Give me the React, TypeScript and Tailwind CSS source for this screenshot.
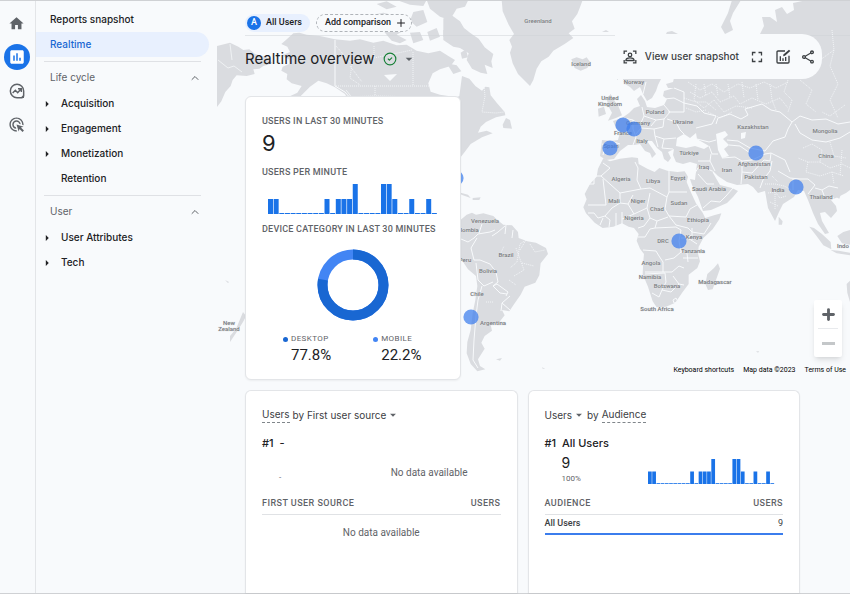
import React from "react";
import { MdAdsClick, MdArrowDropDown, MdArrowRight, MdHome, MdInsertChart, MdOutlineShare } from "react-icons/md";
import { ChevronUp, CircleCheck, Plus } from "lucide-react";

const perMinute = [1, 1, 0, 0, 0, 0, 0, 0, 0, 0, 1, 0, 1, 1, 1, 2, 0, 0, 0, 0, 2, 2, 1, 0, 0, 1, 0, 0, 1, 0];

const sections = [
  { title: "Life cycle", items: ["Acquisition", "Engagement", "Monetization", "Retention"] },
  { title: "User", items: ["User Attributes", "Tech"] },
];

const labels: [string, number, number][] = [
  ["Greenland", 538, 23], ["Iceland", 581, 66], ["Norway", 634, 84], ["United", 610, 100], ["Kingdom", 610, 106],
  ["Poland", 655, 114], ["Germany", 638, 125], ["France", 623, 135], ["Ukraine", 683, 124], ["Kazakhstan", 753, 129],
  ["Mongolia", 825, 133], ["China", 826, 158], ["Italy", 642, 143], ["Spain", 611, 148], ["Türkiye", 689, 155],
  ["Afghanistan", 754, 166], ["Pakistan", 756, 179], ["Iran", 727, 172], ["Iraq", 704, 169], ["Algeria", 621, 181],
  ["Libya", 653, 183], ["Egypt", 678, 180], ["Saudi Arabia", 709, 191], ["India", 778, 192], ["Thailand", 821, 199],
  ["Mali", 614, 203], ["Niger", 638, 203], ["Sudan", 679, 205], ["Chad", 657, 211], ["Nigeria", 634, 220],
  ["Ethiopia", 698, 222], ["DRC", 663, 243], ["Kenya", 694, 239], ["Tanzania", 693, 253], ["Angola", 651, 265],
  ["Namibia", 650, 279], ["Botswana", 667, 288], ["South Africa", 657, 311], ["Madagascar", 715, 284],
  ["Indo", 843, 248], ["Venezuela", 485, 223], ["Colombia", 466, 232], ["Brazil", 506, 257], ["Peru", 465, 262],
  ["Bolivia", 488, 273], ["Chile", 477, 296], ["Argentina", 493, 325], ["New", 229, 325], ["Zealand", 229, 331],
];

const activeUsers = [
  [623, 125], [634, 129], [610, 148], [756, 153], [796, 187], [679, 241], [471, 317], [456, 178],
];

const WorldMap = () => (
  <svg viewBox="217 1 633 376" preserveAspectRatio="xMinYMin slice" className="absolute inset-0 w-full h-full" aria-label="Active users by country">
    <g fill="#dadce0">
      {/* North America */}
      <g transform="translate(210 0) scale(.3333)">
        <path d="M20 138 45 132 60 128 85 140 100 150 118 148 135 162 170 172 188 190 160 198 148 206 130 208 134 222 110 228 80 226 68 240 62 258 46 276 34 304 20 322Z" />
        <path d="M232 116 250 100 268 98 290 104 330 108 375 118 420 122 450 118 490 128 520 122 560 136 590 134 620 152 655 160 690 152 715 168 735 180 722 198 690 208 668 220 655 250 662 275 690 284 730 290 750 320 750 560 560 560 430 330 405 282 375 262 350 250 325 242 300 260 270 290 235 302 215 300 262 278 275 258 245 250 230 238 232 222 214 212 218 200 238 192 236 178 216 166 240 156 232 140 214 132Z" />
        <path d="M480 46 520 38 560 48 585 66 580 92 560 104 590 120 570 130 545 122 520 92 490 74ZM500 12 530 4 560 20 530 28ZM610 36 640 30 652 66 620 80 600 62ZM652 96 680 84 690 110 660 122ZM600 98 630 96 640 120 610 130ZM560 0H650L640 18 600 14ZM700 90 740 96 764 120V146L730 140 700 120Z" />
      </g>
      <g transform="translate(450 0) scale(.3333)">
        <path d="M-70 0H55L45 20 20 26 0 60-30 50-60 26ZM-20 55 5 46 30 64 42 84 60 98 86 116 104 142 130 162 124 184 128 204 104 194 112 222 92 218 66 206 50 180 56 160 30 144 10 128-20 110ZM-10 190 20 196 34 214 10 222Z" />
        <path d="M0 300 28 288 36 228 58 236 76 258 96 272 106 260 118 262 122 286 140 308 164 336 166 346 138 352 108 366 92 380 84 398 110 392 128 400 96 412 62 432 44 456 30 474 0 490Z" />
        <path d="M158 374 168 354 180 360 186 386 160 384ZM48 148 32 158 36 176 54 172Z" />
        <path d="M155 0 158 34 176 74 192 102 178 120 186 140 180 158 188 190 204 222 240 258 250 240 260 206 274 184 296 170 310 152 344 132 370 114 356 100 374 86 366 64 382 42 390 22 398 0Z" />
        <path d="M364 178 380 172 398 178 410 172 422 188 412 204 392 212 374 204Z" />
        <path d="M482 282 492 300 506 320 516 346 498 354 474 362 486 338 476 320 470 296ZM444 326 462 320 468 342 446 350Z" />
      </g>
      {/* South America */}
      <g transform="translate(440 180) scale(.3333)">
        <path d="M50 130 80 104 96 98 108 104 130 100 160 108 170 118 190 134 216 136 234 156 236 174 262 184 288 188 318 204 324 222 302 250 298 286 286 308 254 320 242 344 220 376 208 394 186 390 194 406 180 424 152 434 156 452 134 468 124 488 134 506 114 538 120 558 136 568 112 574 92 552 80 520 82 486 92 450 98 400 106 360 112 318 108 288 84 268 64 238 40 220Z" />
        <path d="M62 38 84 44 92 54 64 44ZM98 54 122 52 118 60 98 60ZM168 538 186 534 180 542ZM306 562 316 566 308 566Z" />
      </g>
      {/* Europe and Asia */}
      <path d="M622 79 625 84 630 87 634 91 640 87 643 94 647 101 652 98 656 91 658 85 661 79 666 76 674 78 673 82 666 84 668 88 674 88 664 91 663 96 667 99 664 105 655 108 647 107 645 101 641 95 637 99 640 106 634 108 629 113 622 118 613 121 616 128 620 132 618 140 611 141 602 140 601 148 600 156 606 160 614 159 620 151 628 145 634 145 640 144 645 151 650 153 652 158 656 154 652 148 647 141 652 141 657 148 662 152 664 159 668 162 671 158 668 152 674 149 673 155 676 162 683 164 690 162 697 164 696 171 695 180 690 179 692 185 698 197 703 211 711 210 727 203 733 197 738 191 732 188 720 185 713 173 712 170 718 176 727 182 737 185 748 184 753 187 758 193 765 191 768 208 775 221 779 212 783 204 794 197 798 190 804 191 808 200 813 213 818 224 825 234 829 233 822 221 820 213 825 212 831 218 837 211 836 206 831 200 838 197 846 193 850 190V0H807L793 3 794 10 787 14 782 7 775 10 777 22 770 17 762 17 764 26 760 34V79H700L660 79Z" />
      <path d="M732 0H741L733 13 730 21 733 30 725 34 721 27 728 13ZM602 32 606 30 609 32ZM667 32 672 31 678 34H666Z" />
      <g transform="translate(560 130) scale(.3333)">
        <path d="M656 260 668 274 666 284 656 284ZM748 290 762 294 786 312 812 336 814 358 790 346 768 316ZM812 360 836 362 870 368V376L830 370ZM832 318 850 306 870 300V344L846 340ZM860 462 870 452V516L862 488ZM588 664H598L594 668ZM826 200 842 196 838 206Z" />
        <path d="M474 400 480 416 468 450 458 478 444 480 436 462 442 432 462 414Z" />
      </g>
      {/* Africa */}
      <path transform="translate(560 130) scale(.3333)" d="M130 85 150 94 180 86 216 82 234 84 236 102 262 116 284 126 298 114 322 122 352 126 374 124 384 140 380 156 394 190 408 220 428 248 436 264 462 256 484 250 478 268 458 298 430 324 416 350 414 370 420 394 412 414 386 434 386 462 368 486 346 518 318 530 290 532 278 514 264 470 248 432 250 392 252 372 240 356 230 332 236 312 222 294 206 290 186 280 160 290 128 294 104 278 78 250 70 232 80 208 74 192 90 162 110 140 114 116Z" />
      {/* New Zealand */}
      <path d="M243 312 246 316 243 322 236 333 230 342 230 336 236 329ZM225 280 229 282 228 283Z" />
    </g>
    {/* inland seas */}
    <path fill="#f8fafc" d="M676 146 677 138 684 134 690 138 696 133 697 139 709 146 704 149 695 146 686 148ZM716 134 725 131 728 135 723 139 729 145 724 149 729 156 722 158 718 150ZM741 133 746 132 745 138 741 139ZM686 236 691 235 690 240ZM384 75 397 74 390 81Z" />
    {/* borders */}
    <g fill="none" stroke="#f8fafc" strokeWidth="1" strokeLinejoin="round">
      <path d="M335 40V86L345 92 352 100M642 107 644 116 640 125 633 120 624 118M633 120 633 129 636 137 633 145M602 144 605 145 603 155M611 141 620 144M644 116 656 120 664 119M664 105 670 112 664 119 663 127 654 129 641 128 636 134M654 129 655 136 664 139 676 138M664 99 674 98 684 103 684 112 668 112M684 103 697 106 704 113 716 116 712 124 696 128M667 119 676 122 680 130 684 134M656 120 651 126M655 136 658 147M664 139 662 148 673 149M697 139 709 142 716 140M709 146 712 154 718 154M698 161 710 161 711 154M710 161 715 171M698 168 704 167 712 171M698 168 692 178M698 174 707 184 714 184M722 158 735 157 742 161 742 172 741 184M716 124 718 118 730 114 741 119 748 115 745 109 762 104 771 110 780 112 792 122 788 129 785 137 773 141 765 151 750 148 738 141 727 140M729 145 740 146 750 153M742 161 752 160 765 154 771 153M742 172 752 173 764 160 770 161 771 153 785 160 790 172M760 188 763 180 770 171 772 161M778 171 790 178 800 179 808 179 815 185 808 194M793 179V190M792 122 800 116 812 120 826 119 838 124 850 122M795 124 800 133 812 140 826 142 840 138 850 132M815 188 822 190 825 198 834 198M822 190 829 186 838 188M703 208 711 201 720 202 726 196 733 188M622 79 627 84M643 94 646 82M674 88 684 92 684 103" />
      <path d="M669 170V192H687M669 192 667 197 650 188 641 189 637 180 638 168 635 162M603 163 610 168 601 176 620 193 641 189M601 176H594V184H586M603 179 606 205H588M620 193 620 203 628 204 633 195M620 203 612 208 605 216M628 204 634 214 622 219M634 214 647 208 650 193M647 208 650 218 644 226 638 228M667 197 665 209 669 216 686 217 690 209 697 205M650 218 657 221 668 217M588 213 594 213 598 218 605 216 610 220 609 227M603 218 600 225M616 213V226M622 212V225M669 216 676 225 688 228 692 232M657 221 655 228 676 227 681 230 679 241 681 252 674 258M638 237 645 237 650 229 655 228M643 250 656 251 659 256 663 262 663 272 645 272M681 252 687 253 688 262M697 244 688 238 681 238M692 232 704 234 711 223M674 258 665 260M663 272 672 272 679 266 684 268M645 274 665 273 666 282 662 290 659 297 652 293M662 290 671 292 679 284 673 276M679 284 684 285M683 258 698 258M676 298 678 302 674 303 673 300ZM692 228 692 240" />
      <path d="M461 239 468 242 474 238 478 234 490 232 495 230M482 224 479 233M492 236 498 232 505 226M506 225 505 234M513 230 512 238M477 238 471 248 474 260 480 260 490 264 496 272 498 282 493 286 497 284 508 292 506 296M476 263 478 280 484 286 493 282M482 286 478 300 476 316 474 340 473 360 478 368M493 286 500 293 507 294M510 296 502 303 510 310M502 303 501 311" />
      <path d="M218 60 228 68 234 66 242 72M230 44 232 60M352 100 350 95 346 90" strokeWidth=".7" />
    </g>
    {/* provinces and states */}
    <g fill="none" stroke="#f8fafc" strokeWidth=".8" strokeDasharray="1 1">
      <path d="M336 86H434M375 86V97M413 52V86M350 66 362 82M336 46 352 64 350 78 360 85M374 46V58L412 50M484 86 485 96 482 112 496 113 504 112M340 97 376 96 420 97M520 250 526 240 520 244 517 262 510 268M522 263 534 266M530 244 535 252 545 250M516 248 524 270 514 276M500 255 504 246M486 302H494M509 280 516 285" />
      <path d="M688 82 700 90 712 84 724 92 738 84 750 88 764 82 776 88 788 82M690 92 700 98 712 92 720 102 734 96 740 104 752 98 766 104 780 98 788 108M696 84 694 100 704 108 714 100 724 112 736 106 752 108M704 84 706 96M716 84 718 96M728 84 730 98M742 82 744 98M756 84 758 100M770 84 772 100 776 110M684 98 696 102 706 102 716 110M788 80 784 92 792 100 788 112M832 30 834 50 830 66 838 84 830 100 838 118M834 50 820 60 812 54M845 105 830 116 822 112M800 80 812 90 806 104 816 112M708 112 720 118 732 112M686 108 696 112 706 110" />
      <path d="M803 148 812 144 822 150 820 162 808 162 798 158M820 162 830 168 842 164 850 168M808 162 806 172 820 176 832 172 844 176M830 142 834 156 846 158M832 172 834 184M842 150 840 176M768 193 775 192 780 198 786 196M770 202 778 206M765 184 775 184 784 186 792 190M772 176 778 182M775 192 775 210" />
    </g>
    <path fill="none" stroke="#cfd2d6" strokeWidth=".7" opacity=".7" d="M245 35.500H850M617.500 35V80" />
    <g fill="#787b80" stroke="#e6e8ea" strokeWidth=".5" paintOrder="stroke" textAnchor="middle" className="font-[Roboto,sans-serif] text-[6px] font-medium">
      {labels.map(([name, x, y]) => (
        <text key={name} x={x} y={y}>{name}</text>
      ))}
    </g>
    <g fill="#3b7ded" fillOpacity=".72">
      {activeUsers.map(([x, y]) => (
        <circle key={x} cx={x} cy={y} r="7.600" />
      ))}
    </g>
  </svg>
);

const MinuteChart = ({ className }: { className: string }) => (
  <svg viewBox="0 0 170 30" preserveAspectRatio="none" className={className} aria-label="Users per minute">
    {perMinute.map((n, i) => {
      const height = n ? n * 15 : 1;
      return <rect key={i} x={i * 5.65} y={30 - height} width="5" height={height} fill="#1a73e8" />;
    })}
  </svg>
);

const Donut = () => (
  <svg viewBox="0 0 72 72" className="w-[72px] h-[72px]" fill="none" strokeWidth="10" aria-label="Device category">
    <circle cx="36" cy="36" r="30.500" stroke="#4285f4" />
    <circle cx="36" cy="36" r="30.500" stroke="#1967d2" pathLength="100" strokeDasharray="77.8 22.2" transform="rotate(-90 36 36)" />
  </svg>
);

const ExploreIcon = () => (
  <svg viewBox="0 0 24 24" className="w-4 h-4" fill="none" stroke="currentColor" strokeWidth="2.200">
    <path d="M12 2a10 10 0 1 0 0 20h7.500a2.500 2.500 0 0 0 2.500-2.500V12A10 10 0 0 0 12 2Z" />
    <path d="m5.500 15 4-4 3.500 3.500 5-5.500M13.500 8.500h5v5" />
    <path d="M17 22.500 22.500 17v5.500Z" fill="currentColor" stroke="none" />
  </svg>
);

const SnapshotIcon = () => (
  <svg viewBox="0 0 24 24" className="w-[14px] h-[14px]" fill="none" stroke="currentColor" strokeWidth="2.200">
    <path d="M2 7V2h5M17 2h5v5M22 17v5h-5M7 22H2v-5" />
    <circle cx="12" cy="8.500" r="3" />
    <path d="M5 18c0-6 14-6 14 0Z" />
  </svg>
);

const FullscreenIcon = () => (
  <svg viewBox="0 0 24 24" className="w-3 h-3" fill="none" stroke="currentColor" strokeWidth="2.600">
    <path d="M3 9V3h6M15 3h6v6M21 15v6h-6M9 21H3v-6" />
  </svg>
);

const EditChartIcon = () => (
  <svg viewBox="0 0 24 24" className="w-4 h-4" fill="none" stroke="currentColor" strokeWidth="2">
    <path d="M15 3H4.500A1.500 1.500 0 0 0 3 4.500v15A1.500 1.500 0 0 0 4.500 21h15a1.500 1.500 0 0 0 1.500-1.500V10M8 11v7M12 14v4M16 12v6" />
    <path d="m12 11 1-3 8-7 2 2-8 7Z" fill="currentColor" stroke="none" />
  </svg>
);

const Sidebar = () => (
  <nav className="w-[181px] shrink-0 pt-[6px] text-[10px] font-medium text-[#202124]">
    <a href="#snapshot" className="flex items-center h-[25px] pl-[14px]">Reports snapshot</a>
    <a href="#realtime" className="flex items-center h-[25px] pl-[14px] mr-2 rounded-r-full bg-[#e8f0fe] text-[#1967d2]">Realtime</a>
    {sections.map((section) => (
      <div key={section.title} className="mt-1">
        <div className="ml-2 mr-4 mb-[3px] border-t border-[#dfe1e5]" />
        <button className="flex items-center justify-between w-full h-[25px] pl-[14px] pr-4 font-normal text-[#5f6368]">
          {section.title}
          <ChevronUp size={12} strokeWidth={2} />
        </button>
        <ul className="pt-px">
          {section.items.map((item) => (
            <li key={item}>
              <a href={`#${item}`} className="flex items-center h-[25px] pl-1">
                <span className="w-[21px]">{item !== "Retention" && <MdArrowRight size={14} />}</span>
                {item}
              </a>
            </li>
          ))}
        </ul>
      </div>
    ))}
  </nav>
);

const caps = "font-[Roboto,sans-serif] text-[9px] leading-3 font-medium text-[#5f6368]";
const card = "bg-white border border-[#e3e5e8] shadow-xs";

const OverviewCard = () => (
  <section className={`${card} relative w-[216px] h-[284px] mt-[17px] px-4 pt-[18px] rounded-md`}>
    <h2 className={`${caps} tracking-wide`}>USERS IN LAST 30 MINUTES</h2>
    <p className="mt-[2px] text-[22px] leading-7">9</p>
    <h2 className={`${caps} mt-[9px] tracking-wide`}>USERS PER MINUTE</h2>
    <MinuteChart className="w-[170px] h-[30px] mt-[6px] ml-[6px]" />
    <h2 className={`${caps} mt-[9px] tracking-wide whitespace-nowrap`}>DEVICE CATEGORY IN LAST 30 MINUTES</h2>
    <div className="flex justify-center mt-[14px]"><Donut /></div>
    <dl className="flex gap-[42px] mt-3 pl-[21px]">
      {[["DESKTOP", "77.8%", "bg-[#1967d2]"], ["MOBILE", "22.2%", "bg-[#4285f4]"]].map(([name, value, dot]) => (
        <div key={name}>
          <dt className="flex items-center gap-[3px] font-[Roboto,sans-serif] text-[8px] leading-3 tracking-wider text-[#5f6368]">
            <span className={`w-[5px] h-[5px] rounded-full ${dot}`} />
            {name}
          </dt>
          <dd className="pl-2 font-[Roboto,sans-serif] text-[15px] leading-5">{value}</dd>
        </div>
      ))}
    </dl>
  </section>
);

export default function App() {
  return (
    <div className="flex min-h-screen bg-[#f8fafc] border-y border-[#cfd1d4] font-[Inter,sans-serif] text-[#202124]">
      {/* icon rail */}
      <nav className="flex flex-col items-center w-9 shrink-0 pt-[14px] pr-[2px] border-r border-[#e3e5e8] text-[#5f6368]">
        <a href="#home" aria-label="Home"><MdHome size={17} /></a>
        <a href="#reports" aria-label="Reports" className="flex items-center justify-center w-[26px] h-[26px] mt-[12px] rounded-full bg-[#1a73e8] text-white"><MdInsertChart size={18} /></a>
        <a href="#explore" aria-label="Explore" className="mt-[13px]"><ExploreIcon /></a>
        <a href="#advertising" aria-label="Advertising" className="mt-[17px]"><MdAdsClick size={17} /></a>
      </nav>
      <Sidebar />
      <main className="relative flex flex-col flex-1 min-w-0">
        {/* map with its controls */}
        <div className="absolute inset-x-0 top-0 h-[376px] overflow-hidden">
          <WorldMap />
          <div className="absolute right-2 bottom-[20px] flex flex-col items-center w-7 bg-white rounded-xs shadow-md">
            <button aria-label="Zoom in" className="flex items-center justify-center w-full h-7 text-[#5f6368]"><Plus size={17} strokeWidth={4} /></button>
            <span className="w-5 border-t border-[#e8eaed]" />
            <button aria-label="Zoom out" className="flex items-center justify-center w-full h-7"><span className="w-[13px] h-[3px] bg-[#c4c7c9]" /></button>
          </div>
          <div className="absolute right-1 bottom-px flex gap-[9px] font-[Roboto,sans-serif] text-[7px] leading-3 text-black">
            <button>Keyboard shortcuts</button>
            <span>Map data ©2023</span>
            <a href="#terms">Terms of Use</a>
          </div>
        </div>

        <header className="relative flex items-start justify-between pl-7 pr-7">
          <div className="pt-[13px]">
            <div className="flex items-center gap-[6px] font-[Roboto,sans-serif] text-[9px] font-medium">
              <button className="flex items-center gap-[5px] h-[18px] pl-[2px] pr-2 rounded-full bg-[#e8f0fe]">
                <span className="flex items-center justify-center w-[14px] h-[14px] rounded-full bg-[#1a73e8] text-white">A</span>
                All Users
              </button>
              <button className="flex items-center gap-1 h-[18px] pl-2 pr-1 border border-dashed border-[#b0b4b9] rounded-full bg-[#f8fafc]">
                Add comparison
                <Plus size={12} strokeWidth={2} />
              </button>
            </div>
            <h1 className="flex items-center mt-[15px] text-[15px] leading-6">
              Realtime overview
              <CircleCheck size={14} strokeWidth={2} className="ml-2 text-[#188038]" />
              <button aria-label="Data quality" className="ml-1 text-[#5f6368]"><MdArrowDropDown size={16} /></button>
            </h1>
          </div>
          <div className="flex items-center h-[45px] mt-[33px] pl-2 pr-[6px] rounded-r-[20px] bg-[#f8fafc] text-[#3c4043]">
            <button className="flex items-center gap-2 text-[10px] font-medium"><SnapshotIcon />View user snapshot</button>
            <button aria-label="Full screen" className="ml-3"><FullscreenIcon /></button>
            <button aria-label="Customize report" className="ml-3"><EditChartIcon /></button>
            <button aria-label="Share" className="ml-[9px]"><MdOutlineShare size={16} /></button>
          </div>
        </header>

        <div className="flex flex-col flex-1 pl-7 pr-[50px]">
          <OverviewCard />
          <div className="grid flex-1 grid-cols-2 gap-[10px] mt-[10px]">
            <section className={`${card} px-4 pt-[15px] border-b-0 rounded-t-md`}>
              <h2 className="flex items-center text-[10px] leading-4 text-[#3c4043]">
                <span className="mr-[3px] border-b border-dashed border-[#80868b]">Users</span>by First user source
                <MdArrowDropDown size={14} className="text-[#5f6368]" />
              </h2>
              <p className="mt-3 text-[11px] leading-4 font-medium">#1&nbsp; -</p>
              <div className="flex h-[46px] pl-[17px] font-[Roboto,sans-serif] text-[#5f6368]">
                <span className="flex-1 pt-[21px] text-[8px]">-</span>
                <span className="pt-[14px] pr-[33px] text-[10px] leading-4">No data available</span>
              </div>
              <table className="w-full">
                <thead className="border-b border-[#e0e2e5]">
                  <tr className="h-[17px] align-top">
                    <th className={`${caps} tracking-wider text-left`}>FIRST USER SOURCE</th>
                    <th className={`${caps} tracking-wider text-right`}>USERS</th>
                  </tr>
                </thead>
                <tbody>
                  <tr><td colSpan={2} className="pt-[10px] font-[Roboto,sans-serif] text-[10px] leading-4 text-center text-[#5f6368]">No data available</td></tr>
                </tbody>
              </table>
            </section>

            <section className={`${card} px-4 pt-[15px] border-b-0 rounded-t-md`}>
              <h2 className="flex items-center text-[10px] leading-4 text-[#3c4043]">
                Users<MdArrowDropDown size={14} className="text-[#5f6368]" />
                <span className="mr-[3px] ml-px">by</span>
                <span className="border-b border-dashed border-[#80868b]">Audience</span>
              </h2>
              <p className="mt-3 text-[11px] leading-4 font-medium">#1&nbsp; All Users</p>
              <div className="flex justify-between h-[46px] pl-[17px] pr-2">
                <div>
                  <p className="pt-1 text-[14px] leading-4">9</p>
                  <p className="font-[Roboto,sans-serif] text-[8px] leading-4 text-[#5f6368]">100%</p>
                </div>
                <MinuteChart className="w-[127px] h-[25px] mt-2" />
              </div>
              <table className="w-full font-[Roboto,sans-serif]">
                <thead className="border-b border-[#e0e2e5]">
                  <tr className="h-[17px] align-top">
                    <th className={`${caps} tracking-wider text-left`}>AUDIENCE</th>
                    <th className={`${caps} tracking-wider text-right`}>USERS</th>
                  </tr>
                </thead>
                <tbody>
                  <tr className="h-5 text-[9px] border-b-2 border-[#3b7ded]">
                    <td className="font-medium text-[#3c4043]">All Users</td>
                    <td className="text-right text-[#3c4043]">9</td>
                  </tr>
                </tbody>
              </table>
            </section>
          </div>
        </div>
      </main>
    </div>
  );
}
